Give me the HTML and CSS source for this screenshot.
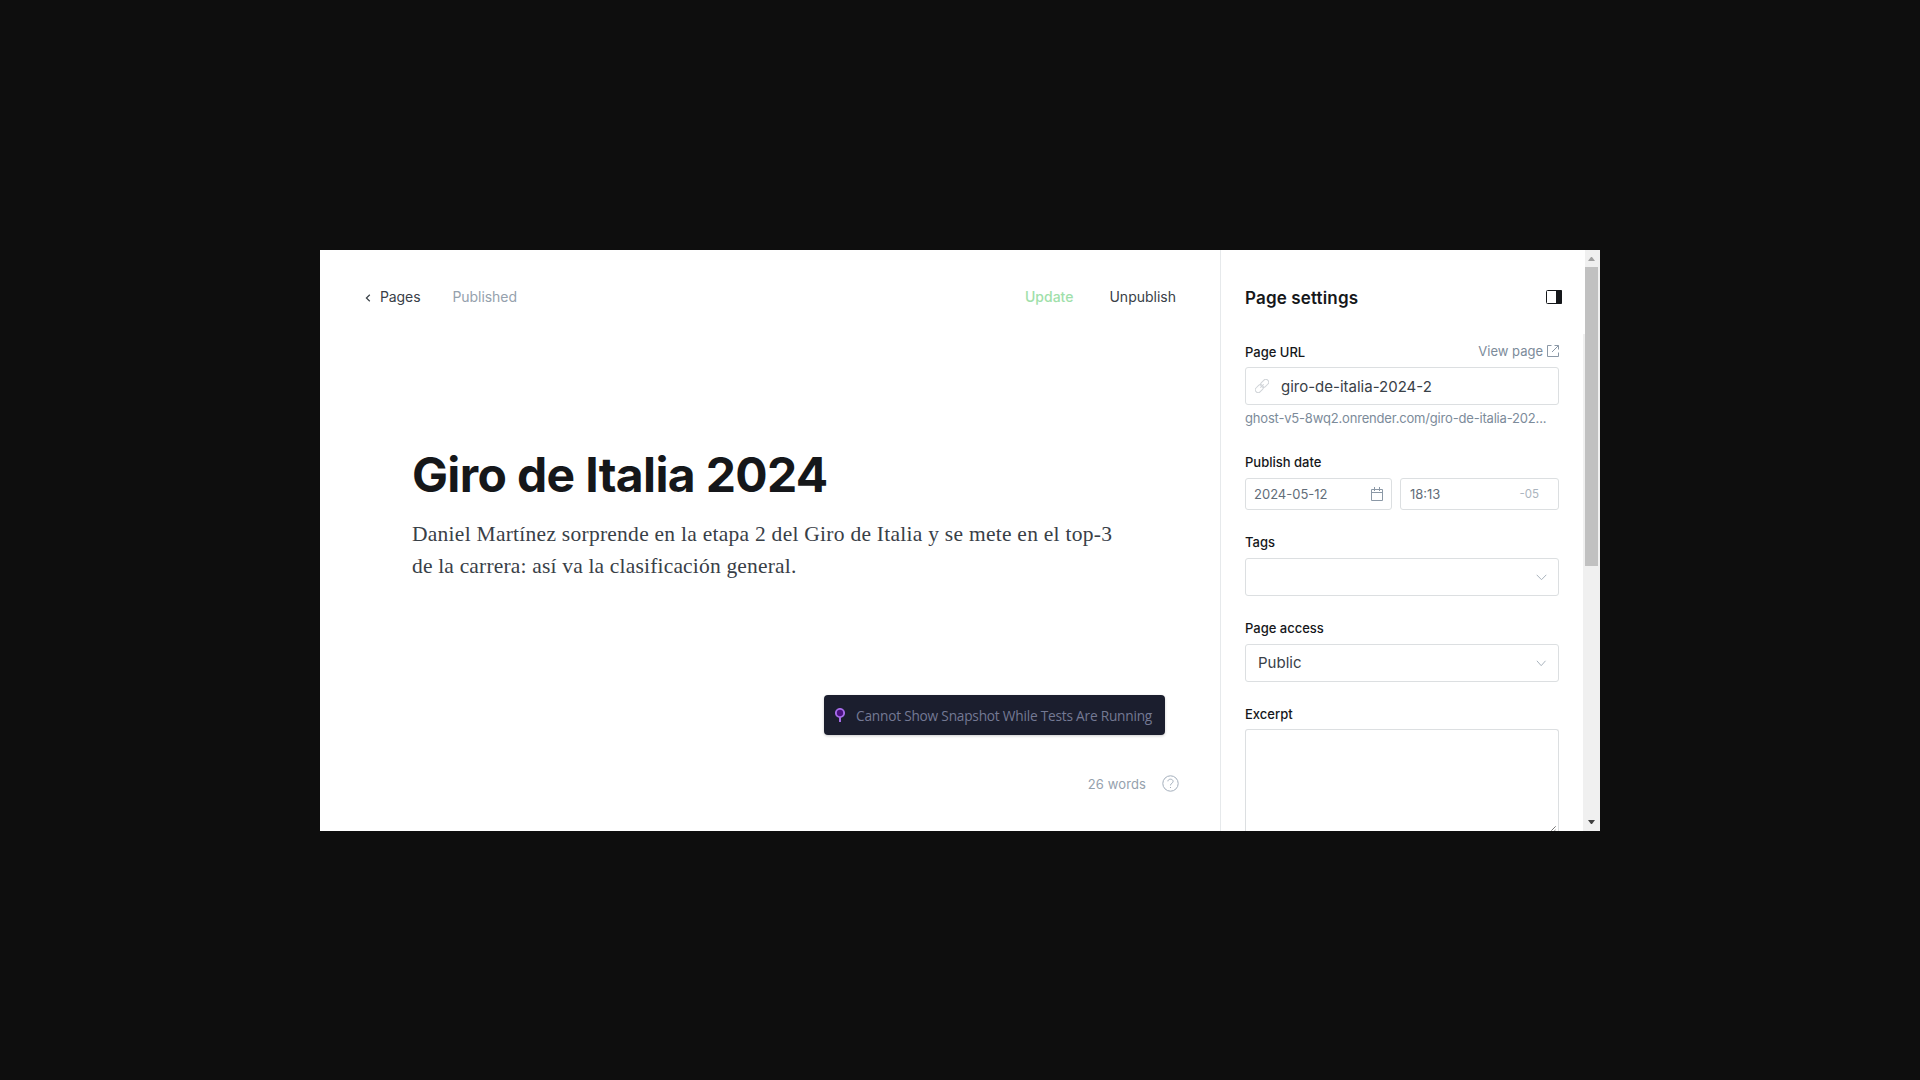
FILE: index.html
```html
<!DOCTYPE html>
<html lang="es">
<head>
<meta charset="utf-8">
<title>Giro de Italia 2024</title>
<link rel="stylesheet" href="styles.css">
</head>
<body>
<div class="app">
  <main class="editor">
    <header class="toolbar">
      <a class="back"><svg width="6" height="8" viewBox="0 0 6 8"><path d="M4.800.8 1.400 4l3.400 3.200"/></svg><span>Pages</span></a>
      <span class="status">Published</span>
      <span class="update">Update</span>
      <span class="unpublish">Unpublish</span>
    </header>
    <h1 class="title">Giro de Italia 2024</h1>
    <p class="lede"><span class="first">Daniel Martínez sorprende en la etapa 2 del Giro de Italia y se mete en el top-3</span><br>de la carrera: así va la clasificación general.</p>
    <div class="snapshot">
      <svg width="10" height="14" viewBox="0 0 10 14"><path d="M5 8.500V14" class="pin"/><circle cx="5" cy="5" r="4.100" class="head"/></svg>
      <span>Cannot Show Snapshot While Tests Are Running</span>
    </div>
    <footer class="foot">
      <span>26 words</span>
      <svg width="17" height="17" viewBox="0 0 17 17"><circle cx="8.500" cy="8.500" r="7.700"/><path d="M5.900 6.300c.1-1.300 1.100-2.100 2.500-2.100 1.500 0 2.700.8 2.700 2.200 0 1.800-2.600 1.800-2.600 4M8.500 12v1"/></svg>
    </footer>
  </main>
  <aside class="settings">
    <div class="settings-head">
      <h2>Page settings</h2>
      <svg width="16" height="14" viewBox="0 0 16 14"><rect x=".5" y=".5" width="15" height="13" rx="1" fill="none" stroke="#15171a"/><path d="M10 0h5a1 1 0 0 1 1 1v12a1 1 0 0 1-1 1h-5z" fill="#15171a"/></svg>
    </div>
    <div class="label-row">
      <label>Page URL</label>
      <a class="view"><span>View page</span><svg width="12" height="12" viewBox="0 0 12 12"><path d="M4.500.5h-4v11h11v-4M7.500.5h4v4M11.300.7 5 7"/></svg></a>
    </div>
    <div class="box url">
      <svg width="14" height="14" viewBox="0 0 14 14"><g transform="rotate(-45 7 7)"><rect x="-1.200" y="4.200" width="8.800" height="5.600" rx="2.600"/><rect x="6.400" y="4.200" width="8.800" height="5.600" rx="2.600"/><path d="M4.500 7h5"/></g></svg>
      <span>giro-de-italia-2024-2</span>
    </div>
    <div class="hint">ghost-v5-8wq2.onrender.com/giro-de-italia-202...</div>
    <label class="publish">Publish date</label>
    <div class="dates">
      <div class="box date"><span>2024-05-12</span><svg width="12" height="14" viewBox="0 0 12 14"><path d="M.5 2.500h11v11H.5zM.5 5.500h11M3.500 0v4M8.500 0v4"/></svg></div>
      <div class="box time"><span>18:13</span><small>-05</small></div>
    </div>
    <label>Tags</label>
    <div class="box select"><span></span><svg width="11" height="7" viewBox="0 0 11 7"><path d="m.7.8 4.800 4.900L10.300.8"/></svg></div>
    <label>Page access</label>
    <div class="box select"><span>Public</span><svg width="11" height="7" viewBox="0 0 11 7"><path d="m.9.8 4.300 4.900L9.500.8"/></svg></div>
    <label class="excerpt">Excerpt</label>
    <div class="box area"><svg width="5" height="5" viewBox="0 0 5 5"><path d="M.3 4.700 4.700.3M3.500 4.800l1.200-1.200"/></svg></div>
  </aside>
  <div class="scroll">
    <div class="scroll-top"><i class="up"></i></div>
    <div class="scroll-track"><i class="down"></i></div>
    <div class="thumb"></div>
  </div>
</div>
</body>
</html>
```
FILE: styles.css
```css
* { box-sizing: border-box; }
body { margin: 0; height: 1080px; overflow: hidden; background: #0e0e0e; font-family: Inter, "Liberation Sans", sans-serif; display: flex; align-items: flex-start; justify-content: center; padding-top: 250px; }
svg { fill: none; flex: none; display: block; }

.app { width: 1280px; height: 581px; background: #fff; display: flex; overflow: hidden; }

.editor { width: 900px; display: flex; flex-direction: column; padding: 0 44px; }
.toolbar { display: flex; align-items: center; height: 94px; padding-bottom: 2px; font-size: 14px; }
.back { display: flex; align-items: center; gap: 9px; color: #394047; margin-left: 1px; letter-spacing: -.1px; }
.back svg { margin-top: 3px; }
.back path { stroke: #394047; stroke-width: 1.2; }
.status { margin-left: 32px; color: #95a1ad; letter-spacing: -.05px; }
.update { margin-left: auto; color: #a0e0aa; font-weight: 500; }
.unpublish { margin-left: 36px; color: #394047; }

.title { margin: 104px 0 0 48px; font-size: 48px; line-height: 54px; letter-spacing: -.66px; color: #15171a; }
.lede { margin: 16px 0 0 48px; font: 21.5px/32px "Liberation Serif", serif; letter-spacing: .18px; color: #394047; white-space: nowrap; }
.first { letter-spacing: .26px; }

.snapshot { align-self: flex-end; margin: 113px 11px 0 0; width: 341px; height: 40px; padding-left: 11px; display: flex; align-items: center; gap: 11px; border-radius: 4px; background: #1b1e2e; box-shadow: 0 1px 3px rgba(0, 0, 0, .2); font: 13.7px/20px "Open Sans", sans-serif; letter-spacing: -.22px; color: #747994; white-space: nowrap; }
.snapshot span { padding-top: 2px; }
.head { fill: #4a1180; stroke: #a56be8; stroke-width: 1.9; }
.pin { stroke: #a56be8; stroke-width: 2; }

.foot { display: flex; align-items: center; align-self: flex-end; gap: 16px; margin: 40px -3px 0 0; font-size: 13px; letter-spacing: .12px; color: #95a1ad; }
.foot svg { stroke: #a3aebb; stroke-width: 1; }

.settings { width: 363px; border-left: 1px solid #e6e9eb; padding: 0 24px; flex: none; }
.settings-head { display: flex; align-items: center; justify-content: space-between; height: 94px; padding-top: 2px; margin-right: -3px; }
.settings-head svg { margin-bottom: 2px; }
h2 { font-size: 17px; font-weight: 600; letter-spacing: .15px; margin: 0; color: #15171a; }
label { display: block; font-size: 13px; line-height: 16px; font-weight: 500; margin: 24px 0 8px; color: #15171a; }
.excerpt { margin-bottom: 7px; }
.label-row { display: flex; justify-content: space-between; margin-bottom: 7px; }
.label-row label { margin: 0; }
.view { display: flex; gap: 4px; font-size: 13px; line-height: 16px; color: #7c8b9a; }
.view span { margin-top: -1px; }
.view svg { stroke: #8b98a6; margin-top: 1px; }
.box { border: 1px solid #dcdfe1; border-radius: 3px; display: flex; align-items: center; }
.url { height: 38px; padding-left: 9px; gap: 12px; font-size: 15px; color: #394047; }
.url svg { stroke: #d0d4d8; }
.hint { margin-top: 5px; font-size: 13px; line-height: 16px; letter-spacing: -.18px; color: #7c8b9a; white-space: nowrap; }
.publish { margin-top: 28px; }
.dates { display: flex; gap: 8px; }
.date, .time { height: 32px; justify-content: space-between; font-size: 13px; color: #626d79; }
.date { width: 147px; padding: 0 8px; }
.date svg { stroke: #8b98a6; }
.time { width: 159px; padding: 0 19px 0 9px; }
small { font-size: 11.5px; color: #abb4be; }
.select { height: 38px; padding: 0 11px 0 12px; justify-content: space-between; font-size: 15px; color: #394047; }
.select span { padding-bottom: 1px; }
.select svg { stroke: #a9b3bd; stroke-width: 1; }
.area { height: 104px; border-bottom: 0; align-items: flex-end; justify-content: flex-end; padding-right: 2px; padding-bottom: 2px; }
.area svg { stroke: #555; stroke-width: .8; }

.scroll { width: 17px; height: 581px; position: relative; }
.scroll-top { height: 84px; margin-left: 2px; padding: 7px 0 0 3px; background: #f0f0f0; }
.scroll-track { height: 497px; padding: 0 0 7px 5px; background: #f0f0f0; display: flex; align-items: flex-end; }
.thumb { position: absolute; left: 2px; top: 17px; width: 13px; height: 299px; background: #c1c1c1; }
.up, .down { display: block; width: 7px; border: 3.5px solid transparent; }
.up { border-top: 0; border-bottom: 4px solid #a0a0a0; }
.down { border-bottom: 0; border-top: 4px solid #404040; }
```
